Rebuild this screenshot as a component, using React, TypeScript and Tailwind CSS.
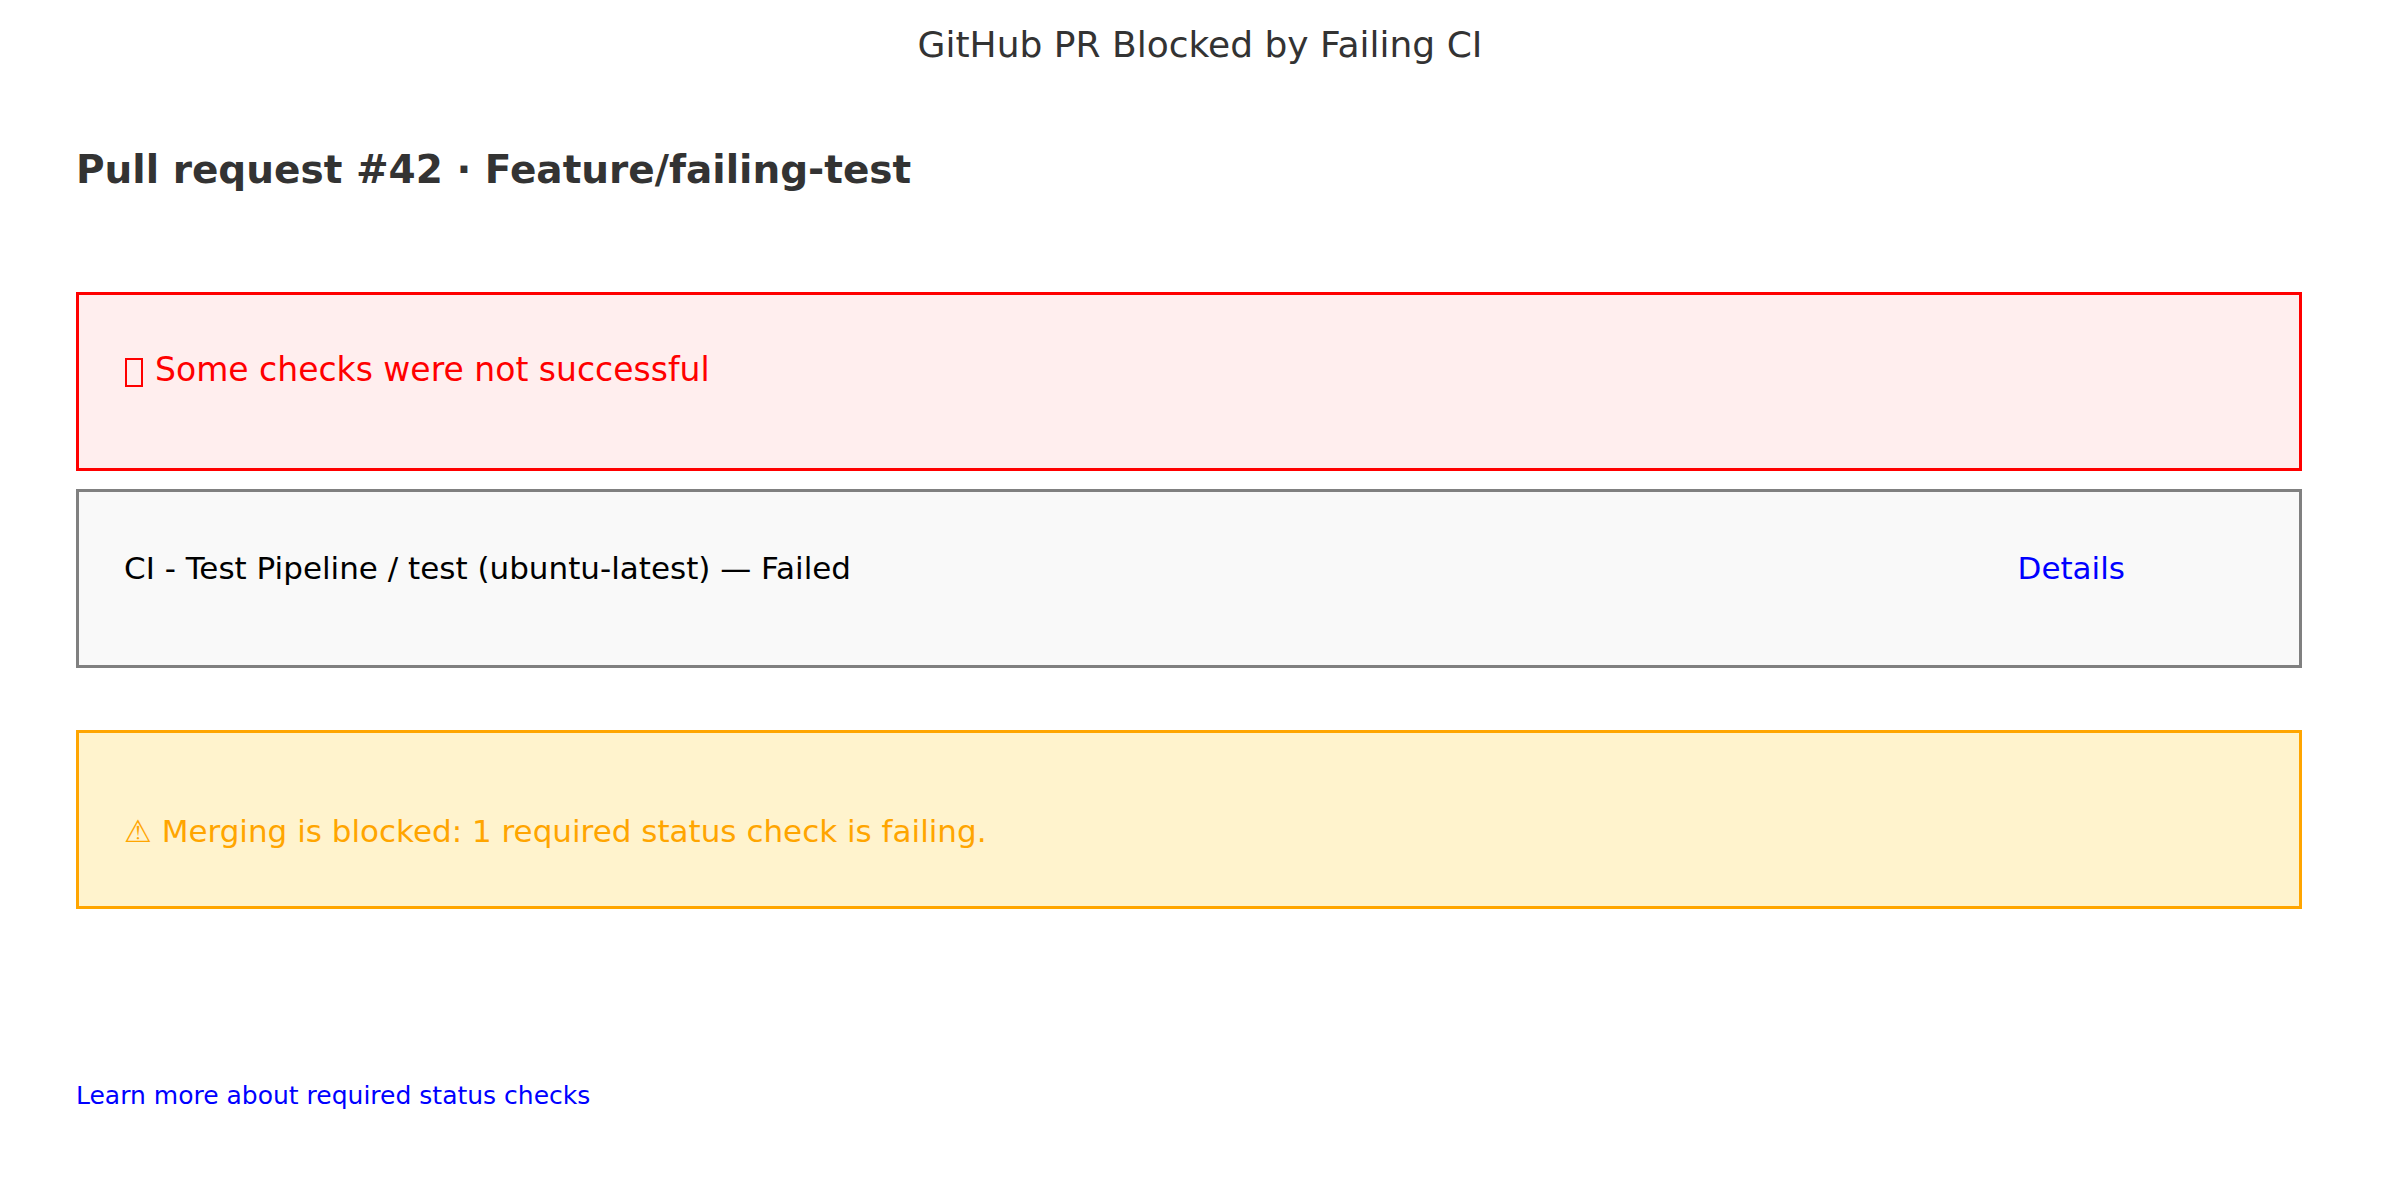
import React from "react";

export default function App() {
  return (
    <main className="bg-white px-[76px] pt-[21px] font-['DejaVu_Sans',sans-serif]">
      <header className="text-center text-[36px] leading-[48px] text-[#333333]">GitHub PR Blocked by Failing CI</header>
      <h1 className="mt-[76px] text-[39px] leading-[50px] font-bold text-[#333333]">
        Pull request #42 · Feature/failing-test
      </h1>
      <section className="mt-[97px] mr-[22px] flex h-[179px] items-center border-3 border-[#ff0000] bg-[#ffeeee] px-[45px] pb-[24px] text-[33px] leading-[40px] text-[#ff0000]">
        <svg aria-hidden="true" className="mr-[11px] h-[35px] w-[20px]" viewBox="0 0 20 35" fill="none" stroke="currentColor" strokeWidth="2">
          <rect x="2" y="7" width="16" height="27" />
        </svg>
        <p>Some checks were not successful</p>
      </section>
      <section className="mt-[18px] mr-[22px] flex h-[179px] items-center justify-between border-3 border-[#808080] bg-[#f9f9f9] pr-[174px] pb-[22px] pl-[45px] text-[31px] leading-[40px] text-black">
        <p>CI - Test Pipeline / test (ubuntu-latest) — Failed</p>
        <a href="#details" className="text-[#0000ff]">Details</a>
      </section>
      <section className="mt-[62px] mr-[22px] flex h-[179px] items-center border-3 border-[#ffa500] bg-[#fff3cd] px-[45px] pt-[22px] text-[31px] leading-[40px] text-[#ffa500]">
        <p>⚠ Merging is blocked: 1 required status check is failing.</p>
      </section>
      <footer className="mt-[169px] text-[25px] leading-[36px]">
        <a href="#status-checks" className="text-[#0000ff]">Learn more about required status checks</a>
      </footer>
    </main>
  );
}
